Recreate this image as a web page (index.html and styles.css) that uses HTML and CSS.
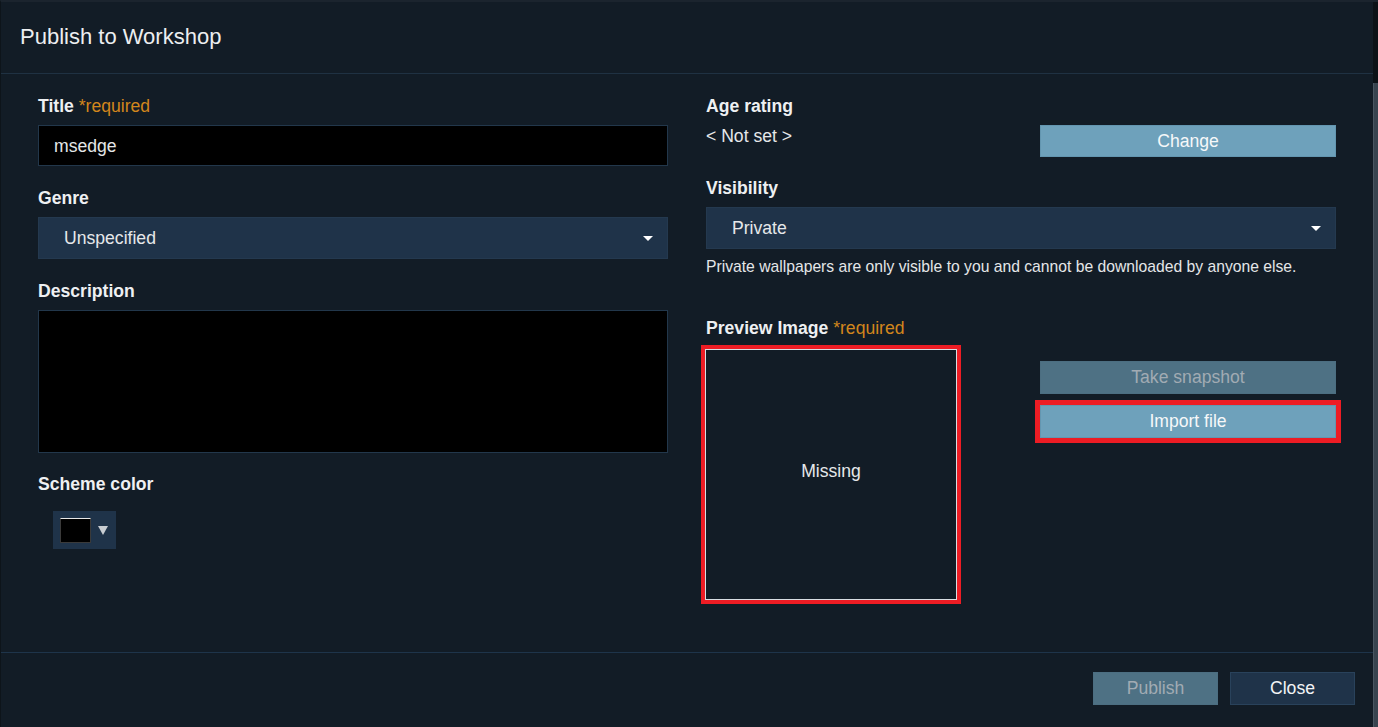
FILE: index.html
```html
<!DOCTYPE html>
<html>
<head>
<meta charset="utf-8">
<link rel="stylesheet" href="styles.css">
</head>
<body>
<div class="dialog">
  <div class="main">
    <div class="header">Publish to Workshop</div>
    <div class="content">
      <div class="col">
        <div class="label">Title <span class="req">*required</span></div>
        <div class="input">msedge</div>
        <div class="label gap">Genre</div>
        <div class="select"><span>Unspecified</span><span class="caret"></span></div>
        <div class="label gap">Description</div>
        <div class="textarea"></div>
        <div class="label gap2">Scheme color</div>
        <div class="colorbtn"><span class="swatch"></span><span class="tri"></span></div>
      </div>
      <div class="col">
        <div class="label">Age rating</div>
        <div class="agerow">
          <span class="notset">&lt; Not set &gt;</span>
          <button class="btn btn-light btn-wide">Change</button>
        </div>
        <div class="label gap3">Visibility</div>
        <div class="select"><span>Private</span><span class="caret"></span></div>
        <div class="help">Private wallpapers are only visible to you and cannot be downloaded by anyone else.</div>
        <div class="label preview-label">Preview Image <span class="req">*required</span></div>
        <div class="preview-row">
          <div class="preview"><span>Missing</span></div>
          <div class="preview-btns">
            <button class="btn btn-dim btn-wide">Take snapshot</button>
            <button class="btn btn-light btn-wide hl">Import file</button>
          </div>
        </div>
      </div>
    </div>
    <div class="footer">
      <button class="btn btn-dim btn-foot">Publish</button>
      <button class="btn btn-dark btn-foot">Close</button>
    </div>
  </div>
  <div class="scrollbar"><div class="sb-top"></div><div class="sb-track"></div></div>
</div>
</body>
</html>
```

FILE: styles.css
```css
* { box-sizing: border-box; }
html, body { margin: 0; padding: 0; }
body {
  width: 1378px;
  height: 727px;
  overflow: hidden;
  background: #121c26;
  font-family: "Liberation Sans", Arial, sans-serif;
  color: #e6e8ea;
}
.dialog {
  display: flex;
  width: 1378px;
  height: 727px;
  border-top: 2px solid #1b242e;
  border-left: 1px solid #0d141a;
}
.main {
  flex: 1;
  display: flex;
  flex-direction: column;
  min-width: 0;
}
.header {
  height: 72px;
  border-bottom: 1px solid #1f3142;
  padding: 22px 0 0 19px;
  font-size: 22px;
  line-height: 26px;
  color: #eceef0;
}
.content {
  flex: 1;
  display: grid;
  grid-template-columns: 630px 630px;
  column-gap: 38px;
  padding: 22px 0 0 37px;
}
.col { display: flex; flex-direction: column; align-items: flex-start; }
.label {
  font-size: 17.6px;
  line-height: 20px;
  font-weight: bold;
  color: #eef0f2;
}
.req { font-weight: normal; color: #d2861c; }
.gap { margin-top: 22px; }
.gap2 { margin-top: 21px; }
.gap3 { margin-top: 21px; }
.input {
  margin-top: 9px;
  width: 630px;
  height: 41px;
  background: #000;
  border: 1px solid #22374b;
  padding: 0 15px;
  font-size: 17.6px;
  line-height: 40px;
  color: #e4e6e8;
}
.select {
  margin-top: 9px;
  width: 630px;
  height: 42px;
  background: #1f3349;
  border: 1px solid #24394f;
  padding: 0 14px 0 25px;
  display: flex;
  align-items: center;
  justify-content: space-between;
  font-size: 17.6px;
  color: #e6e8ea;
}
.caret {
  width: 0; height: 0;
  border-left: 5px solid transparent;
  border-right: 5px solid transparent;
  border-top: 5px solid #ffffff;
}
.textarea {
  margin-top: 9px;
  width: 630px;
  height: 143px;
  background: #000;
  border: 1px solid #22374b;
}
.colorbtn {
  margin-top: 17px;
  margin-left: 15px;
  width: 63px;
  height: 38px;
  background: #1f3349;
  display: flex;
  align-items: center;
  padding-left: 7px;
}
.swatch {
  width: 31px;
  height: 25px;
  background: #000;
  border: 1px solid #3a3a3a;
  border-top: 1px solid #e8e8e8;
}
.tri {
  margin-left: 7px;
  width: 0; height: 0;
  border-left: 5px solid transparent;
  border-right: 5px solid transparent;
  border-top: 9px solid #c8cdd2;
}
.agerow {
  margin-top: 9px;
  width: 630px;
  display: flex;
  justify-content: space-between;
  align-items: flex-start;
}
.notset {
  font-size: 17.6px;
  line-height: 20px;
  padding-top: 1px;
  color: #e6e8ea;
}
.btn {
  font-family: "Liberation Sans", Arial, sans-serif;
  font-size: 17.6px;
  border: 1px solid transparent;
  padding: 0;
  margin: 0;
}
.btn-wide { width: 296px; height: 33px; }
.btn-light { background: #6ea1bb; border-color: #6396b0; color: #f6f8f9; }
.btn-dim { background: #4e7184; border-color: #4c6e81; color: #a1abb3; }
.btn-dark { background: #1f3349; border-color: #29425b; color: #f2f4f6; }
.agerow .btn-wide { height: 32px; }
.help {
  margin-top: 9px;
  font-size: 15.7px;
  line-height: 18px;
  color: #e4e6e8;
}
.preview-label { margin-top: 42px; }
.preview-row {
  margin-top: 11px;
  width: 630px;
  display: flex;
  justify-content: space-between;
  align-items: flex-start;
}
.preview {
  margin-left: -1px;
  width: 252px;
  height: 251px;
  border: 1px solid #d8dde2;
  outline: 4px solid #ed1c24;
  display: flex;
  align-items: center;
  justify-content: center;
  font-size: 17.6px;
  color: #e6e8ea;
}
.preview span { margin-top: -6px; }
.preview-btns {
  margin-top: 12px;
  display: flex;
  flex-direction: column;
  gap: 11px;
}
.hl { outline: 5px solid #ed1c24; outline-offset: 0; }
.footer {
  height: 75px;
  border-top: 1px solid #1e344a;
  display: flex;
  justify-content: flex-end;
  align-items: flex-start;
  gap: 12px;
  padding: 19px 18px 0 0;
}
.btn-foot { width: 125px; height: 33px; }
.scrollbar {
  width: 5px;
  display: flex;
  flex-direction: column;
}
.sb-top { height: 81px; background: #0c1217; }
.sb-track { flex: 1; background: #38444f; border-left: 1px solid #4a5661; }
```
